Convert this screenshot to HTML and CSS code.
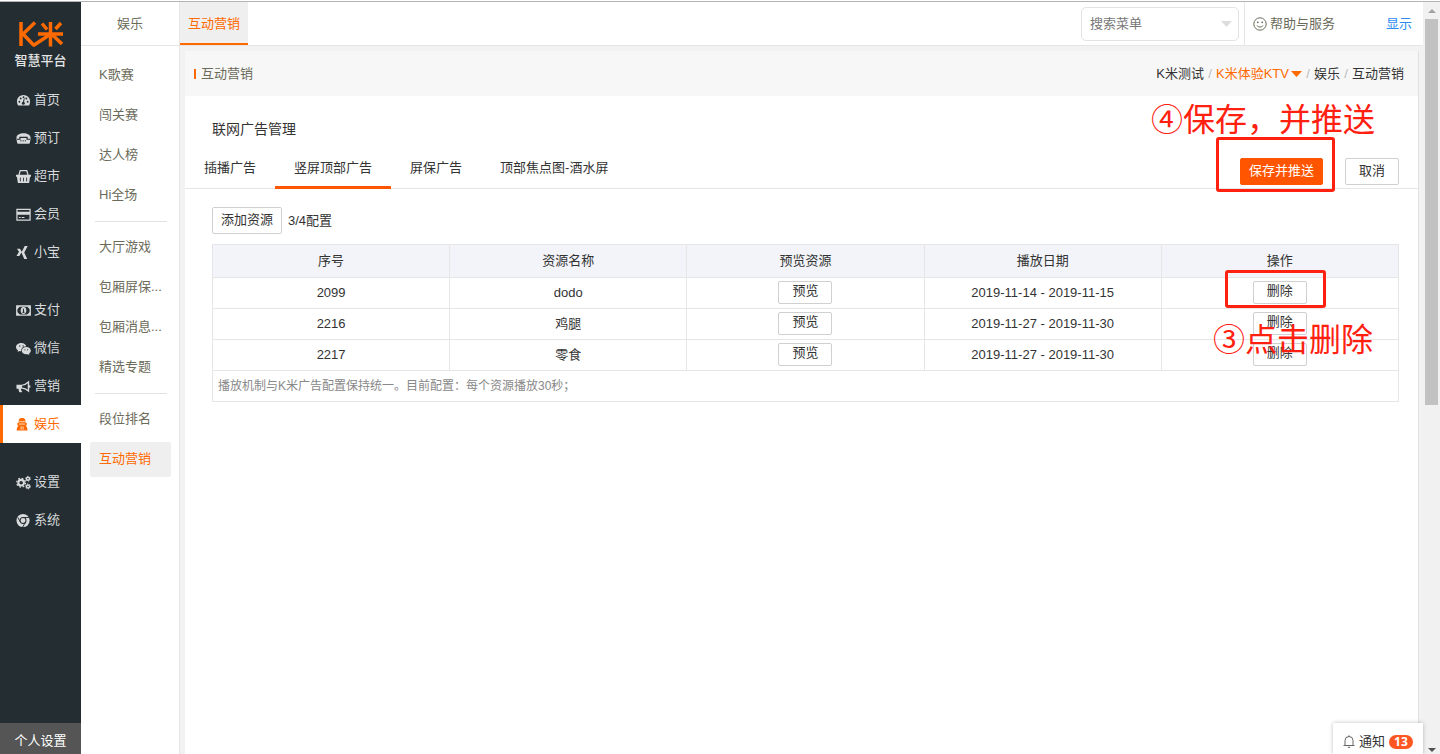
FILE: index.html
```html
<!DOCTYPE html>
<html lang="zh-CN">
<head>
<meta charset="utf-8">
<title>互动营销</title>
<link rel="stylesheet" href="styles.css">
</head>
<body>
<div class="app">
  <aside class="side">
    <div class="brand">
      <svg class="brand-mark" viewBox="0 0 48 28" aria-label="K米" role="img">
        <g fill="none" stroke="#ff6a00" stroke-width="3.500">
          <path d="M4 2v24"/>
          <path d="M18 2.500L6 14L17 25.500"/>
          <path d="M21 14h25M33.500 2v24.500"/>
          <path d="M25 3.500l5 6M44 3l-5.500 6M33 14.500L16 25.800M35 14.500l10 9.500"/>
        </g>
      </svg>
      <span class="brand-name">智慧平台</span>
    </div>
    <nav class="menu">
      <div class="menu-group">
        <a class="menu-item" href="#"><svg class="icon" viewBox="0 0 16 16"><path fill="currentColor" d="M8 2a7 7 0 0 0-7 7c0 1.600.4 3 1.200 4.200h11.600A7.500 7.500 0 0 0 15 9a7 7 0 0 0-7-7z"/><g fill="#232d32"><circle cx="3.600" cy="9.300" r="1"/><circle cx="5" cy="5.900" r="1"/><circle cx="8" cy="4.500" r="1"/><circle cx="11" cy="5.900" r="1"/><circle cx="12.400" cy="9.300" r="1"/><circle cx="7.800" cy="10.800" r="1.600"/><path d="M7.200 10l1.300-4.500.8.200-.8 4.700z"/></g></svg>首页</a>
        <a class="menu-item" href="#"><svg class="icon" viewBox="0 0 16 16"><path fill="currentColor" d="M.5 7C.5 4 4 2.300 8 2.300S15.500 4 15.500 7v1.500l-.7 4c-.1.800-.8 1.200-1.500 1.200H2.700c-.7 0-1.400-.4-1.500-1.200l-.7-4z"/><path fill="none" stroke="#232d32" stroke-width="1.300" d="M1 8.800h3.200V6.800h7.600v2H15"/><path stroke="#232d32" d="M4.500 10.500h7" stroke-dasharray="1.400 1"/></svg>预订</a>
        <a class="menu-item" href="#"><svg class="icon" viewBox="0 0 16 16"><path fill="none" stroke="currentColor" stroke-width="1.400" d="M3 7L4.500 1.700h7L13 7"/><path fill="currentColor" d="M0 6.200h16v2h-1l-1 6.800H2L1 8.200H0z"/><path stroke="#232d32" stroke-width=".9" d="M4.700 9.200v4M8 9.200v4M11.300 9.200v4"/></svg>超市</a>
        <a class="menu-item" href="#"><svg class="icon" viewBox="0 0 16 16"><path fill="none" stroke="currentColor" stroke-width="1.300" d="M1 2.500h14v11.500H1z"/><path fill="currentColor" d="M1 5h14v3.200H1zM3 10.700h2v1H3zM6 10.700h3v1H6z"/></svg>会员</a>
        <a class="menu-item" href="#"><svg class="icon" viewBox="0 0 16 16"><path fill="currentColor" d="M1 4h3.200l2 3.200-2.600 4.600H.5l2.700-4.600zM9.300 1h3.200L8.800 8l3.200 7H8.800L5.800 8z"/></svg>小宝</a>
      </div>
      <div class="menu-group">
        <a class="menu-item" href="#"><svg class="icon" viewBox="0 0 16 16"><path fill="none" stroke="currentColor" stroke-width="1.400" d="M.8 3.200h14.400v9.800H.8z"/><path fill="currentColor" d="M1 3.500h3.500L1 7zM15 3.500h-3.500L15 7zM1 12.700h3.500L1 9.200zM15 12.700h-3.500L15 9.200z"/><ellipse cx="8" cy="8" rx="3" ry="3.700" fill="currentColor"/><path stroke="#232d32" stroke-width="1.200" d="M8 6v4M7 10h2"/></svg>支付</a>
        <a class="menu-item" href="#"><svg class="icon" viewBox="0 0 16 16"><path fill="currentColor" d="M5.800 2C2.600 2 0 4 0 6.500 0 8 .9 9.200 2.200 10l-.5 1.700 2-1c.6.200 1.300.3 2 .3C5.200 8 7.500 5.800 11 5.700 10.500 3.500 8.400 2 5.800 2z"/><path fill="currentColor" d="M11 6.500c-2.800 0-4.800 1.700-4.800 3.900s2 3.800 4.800 3.800c.6 0 1.100 0 1.600-.2l1.700.9-.4-1.500c1.200-.7 1.900-1.800 1.900-3 0-2.200-2.100-3.900-4.800-3.900z"/><g fill="#232d32"><circle cx="4" cy="5.300" r=".7"/><circle cx="7.600" cy="5.300" r=".7"/><circle cx="9.500" cy="9.400" r=".6"/><circle cx="12.400" cy="9.400" r=".6"/></g></svg>微信</a>
        <a class="menu-item" href="#"><svg class="icon" viewBox="0 0 16 16"><path fill="currentColor" d="M.5 6h6v4.300H5.200c.2 1.300.6 2.300 1.500 3.200-.8.900-2.300.8-3.200.3-.5-1.200-.9-2.300-.8-3.500H.5z"/><path fill="none" stroke="currentColor" stroke-width="1.500" d="M6.500 6.500c2.500 0 4.700-1.400 6.800-3.300v9.600c-2.100-1.800-4.300-3-6.800-3.100"/><path stroke="currentColor" stroke-width="1.600" d="M14.500 6.800v2.400"/></svg>营销</a>
        <a class="menu-item is-active" href="#"><svg class="icon" viewBox="0 0 16 16"><path fill="currentColor" d="M2.800 6C2.800 2 4 1 6 1h1c2 0 3.200 1 3.200 5l1.300.5v2l-1 .7c1.300 1.300 1.900 3 1.700 5.300H.8C.6 12.200 1.200 10.500 2.500 9.200l-1-.7v-2z"/><path stroke="#fff" stroke-width=".8" d="M3.500 5h6M3.200 7.500h6.600M5.500 10v3.500M7.500 10v3.500"/></svg>娱乐</a>
      </div>
      <div class="menu-group">
        <a class="menu-item" href="#"><svg class="icon" viewBox="0 0 16 16"><g fill="none" stroke="currentColor"><circle cx="5.500" cy="8.200" r="3" stroke-width="2.200"/><circle cx="5.500" cy="8.200" r="4.700" stroke-width="1.400" stroke-dasharray="1.800 1.890"/><circle cx="12.800" cy="4" r="1.600" stroke-width="1.500"/><circle cx="12.800" cy="4" r="2.600" stroke-width="1" stroke-dasharray="1.300 1.420"/><circle cx="12.800" cy="12.200" r="1.600" stroke-width="1.500"/><circle cx="12.800" cy="12.200" r="2.600" stroke-width="1" stroke-dasharray="1.300 1.420"/></g></svg>设置</a>
        <a class="menu-item" href="#"><svg class="icon" viewBox="0 0 16 16"><circle cx="7.500" cy="8" r="7" fill="currentColor"/><circle cx="7.500" cy="8" r="3.200" fill="none" stroke="#232d32" stroke-width="1.100"/><path fill="none" stroke="#232d32" stroke-width="1" d="M7.500 4.800h6.300M4.700 9.600L1.800 4.600M10.300 9.600l-3.200 5.300"/></svg>系统</a>
      </div>
    </nav>
    <a class="profile" href="#">个人设置</a>
  </aside>

  <aside class="sub">
    <h2 class="sub-title">娱乐</h2>
    <nav class="sub-menu">
      <a class="sub-item" href="#">K歌赛</a>
      <a class="sub-item" href="#">闯关赛</a>
      <a class="sub-item" href="#">达人榜</a>
      <a class="sub-item" href="#">Hi全场</a>
      <hr class="sub-line">
      <a class="sub-item" href="#">大厅游戏</a>
      <a class="sub-item" href="#">包厢屏保...</a>
      <a class="sub-item" href="#">包厢消息...</a>
      <a class="sub-item" href="#">精选专题</a>
      <hr class="sub-line">
      <a class="sub-item" href="#">段位排名</a>
      <a class="sub-item is-active" href="#">互动营销</a>
    </nav>
  </aside>

  <div class="work">
    <header class="top">
      <a class="top-tab" href="#">互动营销</a>
      <div class="search">
        <select class="search-box" aria-label="搜索菜单"><option>搜索菜单</option></select>
        <svg class="search-caret" viewBox="0 0 11 6"><path fill="#ddd" d="M0 0h11L5.500 6z"/></svg>
      </div>
      <div class="top-links">
        <a class="help" href="#"><svg class="smile" viewBox="0 0 14 14"><g fill="none" stroke="#6b6b5a"><circle cx="7" cy="7" r="6.200"/><path d="M4 8.500c1 2 5 2 6 0"/></g><circle cx="4.800" cy="5.300" r=".9" fill="#6b6b5a"/><circle cx="9.200" cy="5.300" r=".9" fill="#6b6b5a"/></svg>帮助与服务</a>
        <a class="show" href="#">显示</a>
      </div>
    </header>

    <main class="stage">
      <section class="panel">
        <div class="panel-head">
          <h1 class="panel-title">互动营销</h1>
          <nav class="crumbs">
            <a href="#">K米测试</a><span class="slash">/</span><a class="crumb-store" href="#">K米体验KTV<svg class="crumb-caret" viewBox="0 0 11 6"><path fill="#ff6a00" d="M0 0h11L5.500 6z"/></svg></a><span class="slash">/</span><a href="#">娱乐</a><span class="slash">/</span><a href="#">互动营销</a>
          </nav>
        </div>
        <h2 class="section-title">联网广告管理</h2>
        <div class="tabs">
          <button class="tab">插播广告</button>
          <button class="tab is-active">竖屏顶部广告</button>
          <button class="tab">屏保广告</button>
          <button class="tab">顶部焦点图-酒水屏</button>
          <div class="tab-actions">
            <div class="noted">
              <button class="btn btn-primary">保存并推送</button>
              <span class="note-frame note-frame-save"></span>
              <span class="note-text note-text-save">④保存，并推送</span>
            </div>
            <button class="btn btn-cancel">取消</button>
          </div>
        </div>
        <div class="panel-body">
          <div class="tools"><button class="btn">添加资源</button><span>3/4配置</span></div>
          <table class="grid">
            <thead><tr><th>序号</th><th>资源名称</th><th>预览资源</th><th>播放日期</th><th>操作</th></tr></thead>
            <tbody>
              <tr><td>2099</td><td>dodo</td><td><button class="btn-small">预览</button></td><td>2019-11-14 - 2019-11-15</td><td><div class="noted"><button class="btn-small">删除</button><span class="note-frame note-frame-delete"></span><span class="note-text note-text-delete">③点击删除</span></div></td></tr>
              <tr><td>2216</td><td>鸡腿</td><td><button class="btn-small">预览</button></td><td>2019-11-27 - 2019-11-30</td><td><button class="btn-small">删除</button></td></tr>
              <tr><td>2217</td><td>零食</td><td><button class="btn-small">预览</button></td><td>2019-11-27 - 2019-11-30</td><td><button class="btn-small">删除</button></td></tr>
            </tbody>
            <tfoot><tr><td colspan="5">播放机制与K米广告配置保持统一。目前配置：每个资源播放30秒；</td></tr></tfoot>
          </table>
        </div>
      </section>
      <a class="notice" href="#"><svg class="bell" viewBox="0 0 12 13"><path fill="none" stroke="#666" d="M.5 10.500h11M2 10.500V5.500a4 4 0 0 1 8 0v5M4.800 12.300h2.400M6 .3v1.500"/></svg>通知<span class="badge">13</span></a>
    </main>
  </div>

  <div class="scroll" aria-hidden="true">
    <svg class="scroll-arrow" viewBox="0 0 8 4"><path fill="#a3a3a3" d="M0 4l4-4 4 4z"/></svg>
    <span class="scroll-thumb"></span>
    <svg class="scroll-arrow" viewBox="0 0 8 4"><path fill="#505050" d="M0 0h8L4 4z"/></svg>
  </div>
</div>
</body>
</html>
```

FILE: styles.css
```css
* { box-sizing: border-box; }
body {
  margin: 0;
  padding-top: 1px;
  font: 13px/20px "Liberation Sans", "Noto Sans CJK SC", sans-serif;
  color: #333;
  background: #fff;
}
a { color: inherit; text-decoration: none; }
h1, h2 { margin: 0; font-weight: 400; }
button, select { font: inherit; color: inherit; }

.app { display: flex; height: calc(100vh - 1px); border-top: 1px solid #b4b4b4; }

/* Main menu */
.side { display: flex; flex-direction: column; width: 81px; background: #232d32; color: #d8dadb; }
.brand { display: flex; flex-direction: column; align-items: center; height: 79px; padding-top: 18px; }
.brand-mark { width: 48px; height: 28px; }
.brand-name { margin-top: 3px; color: #e6e6e6; font-weight: 500; }
.menu { flex: 1; display: flex; flex-direction: column; gap: 20px; }
.menu-item { display: flex; align-items: center; gap: 3px; height: 38px; padding-left: 16px; }
.menu-item.is-active { padding-left: 13px; border-left: 3px solid #ff6a00; background: #fff; color: #ff6a00; }
.icon { width: 15px; height: 15px; flex: none; }
.profile { height: 31px; padding-top: 8px; background: #555; color: #fff; text-align: center; }

/* Second-level menu */
.sub { width: 99px; border-right: 1px solid #e6e6e6; color: #6b6b5a; }
.sub-title { height: 44px; font-size: 13px; line-height: 43px; text-align: center; border-bottom: 1px solid #e6e6e6; }
.sub-menu { display: flex; flex-direction: column; gap: 5px; padding: 12px 8px 0 9px; }
.sub-item { height: 35px; padding-left: 9px; line-height: 34px; border-radius: 2px; }
.sub-item.is-active { background: #efefef; color: #ff6a00; }
.sub-line { width: 72px; height: 1px; margin: 3px 5px; border: 0; background: #e2e2e2; }

/* Top bar */
.work { flex: 1; min-width: 0; display: flex; flex-direction: column; }
.top { display: flex; align-items: center; height: 44px; border-bottom: 1px solid #e6e6e6; color: #6b6b5a; }
.top-tab { height: 43px; padding: 0 8px; line-height: 43px; background: #efefef; color: #ff6a00; border-bottom: 2px solid #ff6a00; }
.search { position: relative; margin-left: auto; }
.search-box { display: block; width: 158px; height: 34px; padding: 0 8px; appearance: none; border: 1px solid #e2e2e2; border-radius: 5px; background: #fff; color: #777; }
.search-caret { position: absolute; right: 7px; top: 14px; width: 11px; height: 6px; }
.top-links { display: flex; align-items: center; justify-content: space-between; width: 179px; height: 43px; margin-left: 5px; padding: 0 11px 0 8px; border-left: 1px solid #e6e6e6; }
.help { display: flex; align-items: center; gap: 3px; }
.smile { width: 14px; height: 14px; }
.show { color: #2d8cf0; }

/* Content panel */
.stage { position: relative; flex: 1; display: flex; padding: 5px 4px 0 5px; background: #f2f2f2; }
.panel { flex: 1; background: #fff; border-right: 1px solid #e2e2e2; }
.panel-head { display: flex; align-items: center; justify-content: space-between; height: 45px; padding: 0 14px 0 9px; background: #f7f7f7; }
.panel-title { display: flex; align-items: center; gap: 5px; font-size: 13px; color: #6b6b5a; }
.panel-title::before { content: ""; width: 2px; height: 10px; background: #ff6a00; }
.crumbs { display: flex; align-items: center; }
.slash { width: 12px; color: #bbb; text-align: center; }
.crumb-store { display: flex; align-items: center; gap: 2px; color: #ff6a00; }
.crumb-caret { width: 11px; height: 6px; }
.section-title { padding: 23px 27px 0; font-size: 14px; line-height: 20px; }
.tabs { display: flex; height: 50px; border-bottom: 1px solid #e6e6e6; }
.tab { height: 50px; padding: 11px 19px 0; border: 0; border-bottom: 3px solid transparent; background: none; }
.tab.is-active { border-bottom-color: #ff5500; }
.tab-actions { display: flex; align-items: flex-start; gap: 22px; margin: 19px 19px 0 auto; }
.btn { display: block; height: 27px; padding: 0 8px 2px; line-height: 20px; border: 1px solid #d0d0d0; border-radius: 2px; background: #fff; }
.btn-primary { border-color: #ff5500; background: #ff5500; color: #fff; }
.btn-cancel { width: 54px; }
.panel-body { padding: 18px 19px 0 27px; }
.tools { display: flex; align-items: center; gap: 6px; margin-bottom: 10px; }

.grid { width: 100%; table-layout: fixed; border-collapse: collapse; }
.grid th, .grid td { height: 31px; padding: 0; border: 1px solid #e6e6e6; text-align: center; font-weight: 400; }
.grid th { height: 33px; background: #f2f4f9; }
.grid tfoot td { padding-left: 5px; text-align: left; font-size: 12px; color: #888; }
.btn-small { display: block; width: 54px; height: 23px; margin: 0 auto 1px; padding: 0 0 3px; line-height: 18px; border: 1px solid #d0d0d0; border-radius: 2px; background: #fff; }

/* Red walkthrough marks over the controls */
.noted { position: relative; width: fit-content; margin: 0 auto; }
.note-frame { position: absolute; z-index: 2; border: 3px solid #ff2010; border-radius: 3px; pointer-events: none; }
.note-text { position: absolute; z-index: 2; font-size: 32px; line-height: 40px; color: #ff2010; white-space: nowrap; pointer-events: none; }
.note-frame-save { inset: -21px -12px -7px -24px; }
.note-text-save { right: -52px; bottom: 45px; }
.note-frame-delete { inset: -11px -19px -4px -28px; }
.note-text-delete { left: -40px; top: 39px; }

.notice { position: absolute; right: 0; bottom: 0; display: flex; align-items: center; width: 90px; height: 31px; padding: 6px 0 0 10px; background: #fff; box-shadow: 0 0 4px rgba(0, 0, 0, .25); }
.bell { width: 12px; height: 13px; margin-right: 4px; }
.badge { margin-left: 4px; padding: 0 5px; border-radius: 7px; background: #ff5722; color: #fff; font: 700 12px/14px "Open Sans", sans-serif; }

/* Scroll track */
.scroll { display: flex; flex-direction: column; align-items: center; width: 17px; padding: 7px 0 2px; background: #f1f1f1; }
.scroll-arrow { width: 8px; height: 4px; }
.scroll-thumb { width: 13px; height: 52%; margin: 6px 0 auto; background: #c1c1c1; }
```
